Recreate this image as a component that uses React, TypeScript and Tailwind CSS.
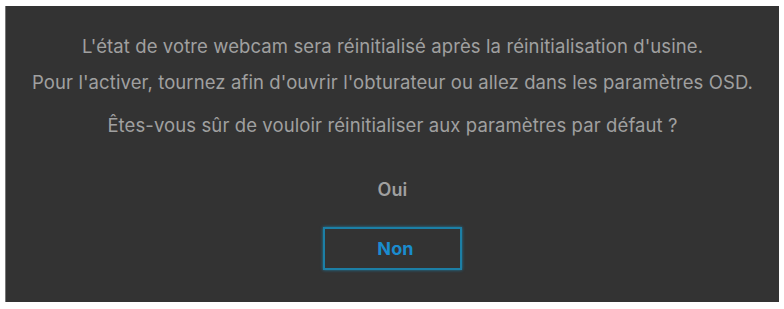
export default function App() {
  return (
    <div className="w-[784px] h-[309px] bg-white pt-[6px] pl-[5px]">
      <div
        className="w-[774px] h-[296px] bg-[#333333] border-l border-[#777] flex flex-col items-center text-[#a0a0a0] text-[18.5px] tracking-[0.1px]"
        style={{ fontFamily: "Inter, 'Noto Sans', sans-serif" }}
      >
        <p className="mt-[29px] leading-[22px]">L'état de votre webcam sera réinitialisé après la réinitialisation d'usine.</p>
        <p className="mt-[14px] leading-[22px]">Pour l'activer, tournez afin d'ouvrir l'obturateur ou allez dans les paramètres OSD.</p>
        <p className="mt-[21px] leading-[22px]">Êtes-vous sûr de vouloir réinitialiser aux paramètres par défaut ?</p>
        <p className="mt-[43px] leading-[22px] font-semibold text-[18px]">Oui</p>
        <div className="mt-[26px] w-[139px] h-[43px] border-2 border-[#1c7fa6] shadow-[0_0_3px_#1c7fa6] flex items-center justify-center pl-[6px] text-[#1a8ccf] font-bold text-[18px]">
          Non
        </div>
      </div>
    </div>
  );
}
